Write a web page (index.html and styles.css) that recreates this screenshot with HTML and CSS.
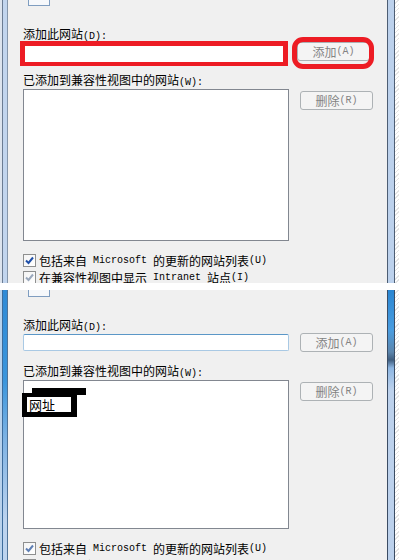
FILE: index.html
```html
<!DOCTYPE html>
<html>
  <head>
    <meta charset="utf-8">
    <title>兼容性视图设置</title>
    <link rel="stylesheet" href="styles.css">
  </head>
  <body>
    <section class="panel panel_a">
      <div class="frame_left"></div>
      <div class="dialog">
        <div class="stub"></div>
        <p class="caption">添加此网站<span class="en">(D):</span></p>
        <div class="row row_input">
          <div class="field marked"></div>
          <div class="btn_wrap ringed"><span class="btn">添加<span class="en">(A)</span></span></div>
        </div>
        <p class="caption caption_list">已添加到兼容性视图中的网站<span class="en">(W):</span></p>
        <div class="row">
          <div class="list"></div>
          <div class="btn_wrap btn_side"><span class="btn">删除<span class="en">(R)</span></span></div>
        </div>
        <label class="option">
          <span class="box"><svg width="9" height="9" viewBox="0 0 9 9"><path d="M1 4.5 L3.5 7 L8 1.5" class="tick_on"/></svg></span>包括来自<span class="en">&nbsp;Microsoft&nbsp;</span>的更新的网站列表<span class="en">(U)</span>
        </label>
        <label class="option">
          <span class="box"><svg width="9" height="9" viewBox="0 0 9 9"><path d="M1 4.5 L3.5 7 L8 1.5" class="tick_off"/></svg></span>在兼容性视图中显示<span class="en">&nbsp;Intranet&nbsp;</span>站点<span class="en">(I)</span>
        </label>
      </div>
      <div class="frame_right"></div>
      <div class="hatch"></div>
    </section>

    <div class="gap"></div>

    <section class="panel panel_b">
      <div class="frame_left"></div>
      <div class="dialog">
        <div class="stub"></div>
        <p class="caption">添加此网站<span class="en">(D):</span></p>
        <div class="row row_input">
          <div class="field"></div>
          <div class="btn_wrap"><span class="btn">添加<span class="en">(A)</span></span></div>
        </div>
        <p class="caption caption_list">已添加到兼容性视图中的网站<span class="en">(W):</span></p>
        <div class="row">
          <div class="list list_short">
            <div class="blot"></div>
            <div class="tag">网址</div>
          </div>
          <div class="btn_wrap btn_side"><span class="btn">删除<span class="en">(R)</span></span></div>
        </div>
        <label class="option">
          <span class="box"><svg width="9" height="9" viewBox="0 0 9 9"><path d="M1 4.5 L3.5 7 L8 1.5" class="tick_soft"/></svg></span>包括来自<span class="en">&nbsp;Microsoft&nbsp;</span>的更新的网站列表<span class="en">(U)</span>
        </label>
        <label class="option">
          <span class="box"><svg width="9" height="9" viewBox="0 0 9 9"><path d="M1 4.5 L3.5 7 L8 1.5" class="tick_off"/></svg></span>在兼容性视图中显示<span class="en">&nbsp;Intranet&nbsp;</span>站点<span class="en">(I)</span>
        </label>
      </div>
      <div class="frame_right"></div>
      <div class="hatch"></div>
    </section>
  </body>
</html>
```

FILE: styles.css
```css
body {
  margin: 0;
  background: #ffffff;
  font-family: 'Noto Sans CJK SC', sans-serif;
  font-size: 12px;
  color: #000000;
}

.panel {
  display: flex;
  overflow: hidden;
}

.panel_a {
  height: 283px;
}

.panel_b {
  height: 270px;
}

.gap {
  height: 7px;
}

.frame_left {
  width: 8px;
  flex: none;
  background: linear-gradient(to right, #dde4ee 0 2px, #6b7c93 2px 3px, #c2d5ee 3px 7px, #8596ab 7px 8px);
}

.panel_b .frame_left {
  background:
    linear-gradient(to right, #b9d2ec 0 2px, #3d6c9c 2px 3px, transparent 3px 7px, #4f7398 7px 8px),
    linear-gradient(to bottom, #2f8ad6 0, #3a95dc 90px, #7fb3e4 150px, #bcd3ee 230px);
}

.frame_right {
  width: 8px;
  flex: none;
  background: linear-gradient(to right, #4d5d73 0 1px, #bcd1ec 1px 7px, #4d5d73 7px 8px);
}

.panel_b .frame_right {
  background:
    linear-gradient(to right, #3b4c63 0 1px, transparent 1px 7px, #3b4c63 7px 8px),
    linear-gradient(to bottom, #2a86d2 0, #4a9de0 40px, #5d86ad 62px, #3f5d7e 70px, #8db6e2 78px, #bcd1ec 100px);
}

.hatch {
  width: 4px;
  flex: none;
  background: repeating-linear-gradient(135deg, #ffffff 0 2px, #e4e4e4 2px 3px);
}

.dialog {
  flex: 1;
  background: #f0f0f0;
  padding-left: 15px;
  box-sizing: border-box;
}

.stub {
  width: 20px;
  height: 5px;
  margin-left: 5px;
  border: 1px solid #7f9dc0;
  border-top: none;
  background: #f6f8fb;
}

.panel_b .stub {
  height: 6px;
}

.caption {
  margin: 21px 0 0;
  height: 14px;
  line-height: 14px;
  white-space: nowrap;
}

.caption_list {
  margin-top: 12px;
}

.en {
  font-family: 'Liberation Mono', monospace;
  font-size: 10px;
}

.row {
  display: flex;
  align-items: flex-start;
  gap: 11px;
  margin-top: 2px;
}

.row_input {
  height: 19px;
  margin-top: 1px;
}

.field {
  width: 266px;
  height: 17px;
  margin-top: 1px;
  box-sizing: border-box;
  background: #ffffff;
  border: 1px solid #a9c9e4;
  border-top-color: #5b97c7;
  border-radius: 2px;
}

.field.marked {
  width: 268px;
  height: 25px;
  margin: -1px -2px 0 -3px;
  border: 5px solid #ed1c24;
  border-bottom-width: 4px;
  border-radius: 0;
}

.btn_wrap {
  position: relative;
}

.btn {
  display: flex;
  align-items: center;
  justify-content: center;
  width: 73px;
  height: 19px;
  box-sizing: border-box;
  border: 1px solid #adb2b5;
  border-radius: 3px;
  background: #f4f4f4;
  color: #838383;
  white-space: nowrap;
}

.btn_side {
  margin-top: 2px;
}

.ringed::after {
  content: "";
  position: absolute;
  left: -5px;
  right: -4px;
  top: -5px;
  bottom: -8px;
  border: 5px solid #ed1c24;
  border-radius: 11px;
}

.list {
  position: relative;
  width: 266px;
  height: 152px;
  box-sizing: border-box;
  background: #ffffff;
  border: 1px solid #828790;
}

.list_short {
  height: 149px;
}

.blot {
  position: absolute;
  left: 8px;
  top: 7px;
  width: 54px;
  height: 7px;
  background: #000000;
}

.tag {
  position: absolute;
  left: -2px;
  top: 12px;
  width: 55px;
  height: 24px;
  box-sizing: border-box;
  border: solid #000000;
  border-width: 4px 6px 5px 5px;
  background: #ffffff;
  font-size: 13px;
  line-height: 15px;
  padding-left: 2px;
}

.option {
  display: flex;
  align-items: center;
  height: 17px;
  white-space: nowrap;
}

.option:first-of-type {
  margin-top: 11px;
}

.box {
  width: 13px;
  height: 13px;
  box-sizing: border-box;
  margin-right: 3px;
  border: 1px solid #8e8f8f;
  background: linear-gradient(135deg, #f4f4f4, #ffffff);
  display: flex;
  align-items: center;
  justify-content: center;
}

.box path {
  fill: none;
  stroke-width: 2;
}

.tick_on {
  stroke: #1f4fa8;
}

.tick_soft {
  stroke: #5f7fb4;
}

.tick_off {
  stroke: #9aa8bc;
}
```
